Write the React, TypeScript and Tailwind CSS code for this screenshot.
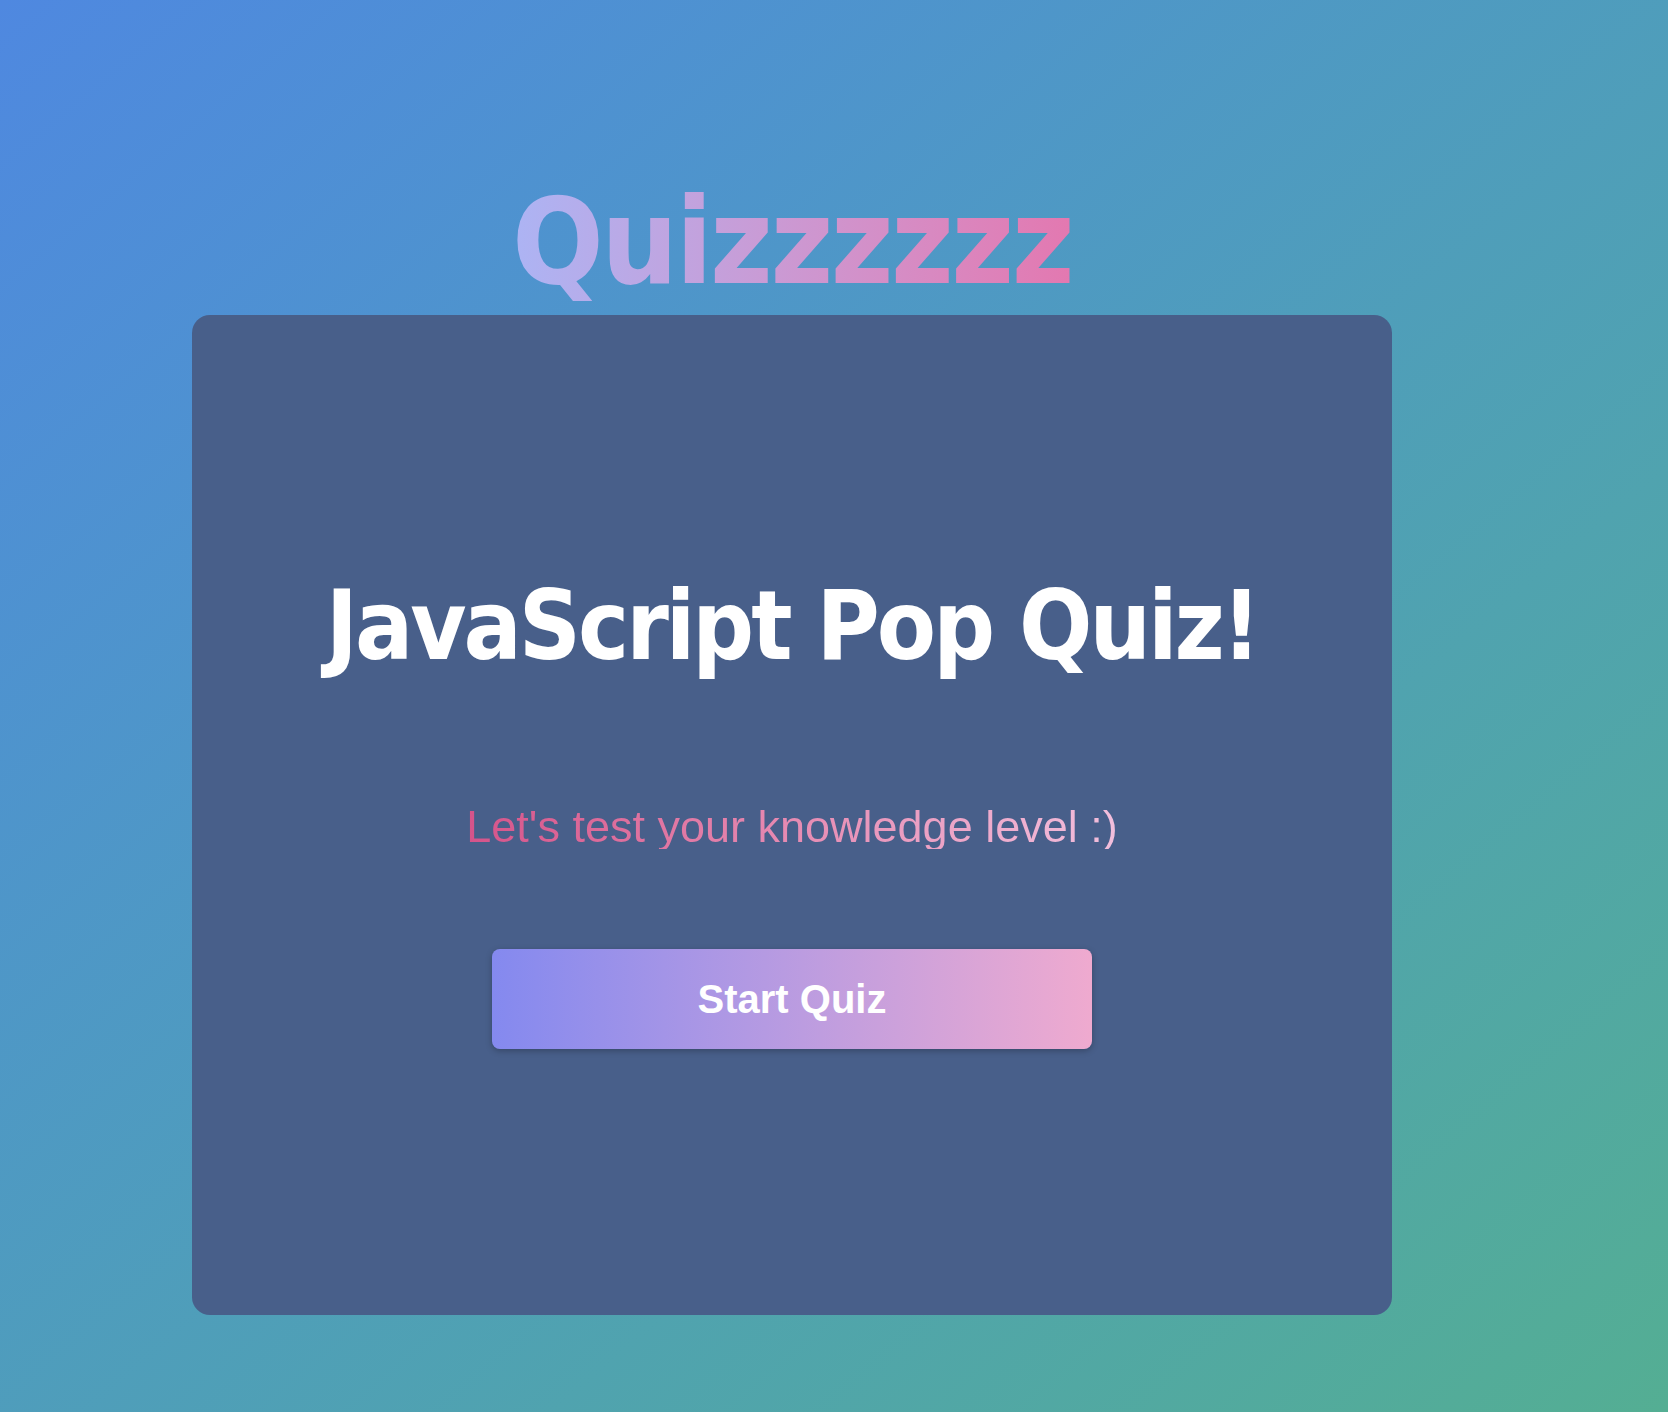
export default function App() {
  return (
    <div className="min-h-[1412px] w-full bg-gradient-to-br from-[#4f88e0] to-[#54ae93] pl-[192px] pt-[170px]">
      <div className="w-[1200px] flex flex-col items-center">
        <h1 className="font-['DejaVu_Sans_Condensed','DejaVu_Sans',sans-serif] font-bold text-[120px] leading-[1.2] tracking-[-2.5px] bg-gradient-to-r from-[#acb4f4] to-[#e378b0] bg-clip-text text-transparent">
          Quizzzzzz
        </h1>
        <div className="mt-[1px] w-[1200px] h-[1000px] rounded-[18px] bg-[#485f8a] flex flex-col items-center justify-center">
          <h2 className="mt-[-4px] font-['DejaVu_Sans_Condensed','DejaVu_Sans',sans-serif] font-bold text-[96px] leading-none tracking-[-3px] text-white">
            JavaScript Pop Quiz!
          </h2>
          <p className="mt-[130px] font-['Liberation_Sans',Arial,sans-serif] text-[45px] leading-none bg-gradient-to-r from-[#d5538a] to-[#f2bfdd] bg-clip-text text-transparent">
            Let's test your knowledge level :)
          </p>
          <button className="mt-[100px] w-[600px] h-[100px] rounded-[8px] bg-gradient-to-r from-[#8489ef] to-[#efaacf] shadow-[0_2px_6px_rgba(0,0,0,0.25)] font-['Liberation_Sans',Arial,sans-serif] font-bold text-[40px] text-white">
            Start Quiz
          </button>
        </div>
      </div>
    </div>
  )
}
